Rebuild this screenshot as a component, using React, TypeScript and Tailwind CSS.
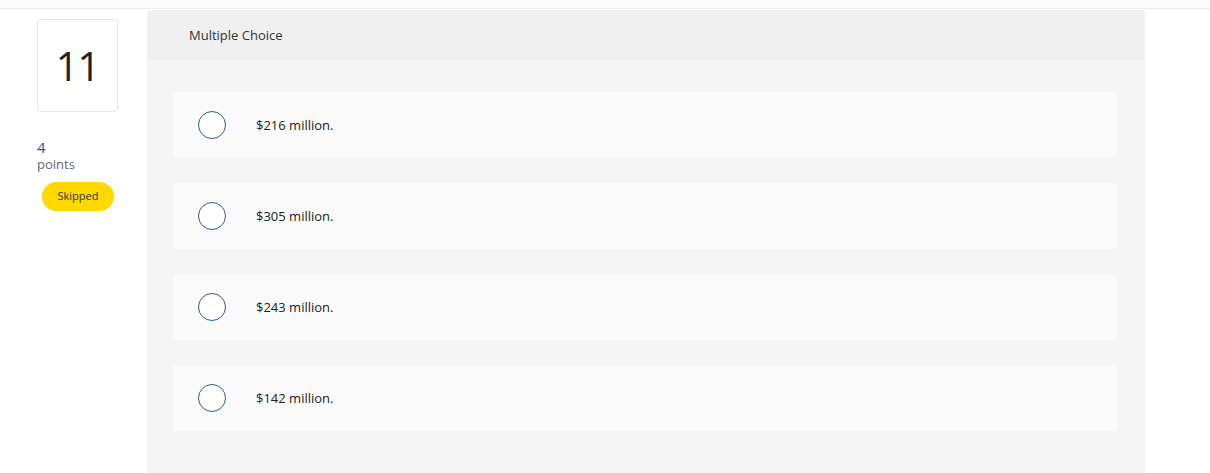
const options = ["$216 million.", "$305 million.", "$243 million.", "$142 million."];

export default function App() {
  return (
    <div
      className="h-[473px] w-[1210px] overflow-hidden bg-white text-[#222]"
      style={{ fontFamily: '"Open Sans", "Liberation Sans", sans-serif' }}
    >
      <div className="h-[9px] border-b border-[#ececec] bg-[#fcfcfc]" />
      <div className="flex pt-px">
        <aside className="ml-[37px] w-[81px] shrink-0 pt-[9px]">
          <div className="flex h-[93px] w-[81px] items-center justify-center rounded-[4px] border border-[#e6e6e6]">
            <span className="text-[40px] leading-none tracking-[-1px] text-[#222]">11</span>
          </div>
          <div className="mt-[26px] text-[15px] leading-[18px] text-[#1f5694]">4</div>
          <div className="text-[13px] leading-[16px] text-[#666]">points</div>
          <div className="mt-[10px] ml-[5px] flex h-[29px] w-[72px] items-center justify-center rounded-full bg-[#ffd800] text-[11px] text-[#333]">
            Skipped
          </div>
        </aside>
        <main className="ml-[29px] h-[470px] w-[998px] overflow-hidden rounded-t-[3px] bg-[#f5f5f5]">
          <div className="flex h-[50px] items-center bg-[#f0f0f0] pl-[42px] pt-[2px] text-[13px] text-[#333]">
            Multiple Choice
          </div>
          <div className="flex flex-col gap-[25px] px-[26px] pt-[32px] pr-[28px]">
            {options.map((o) => (
              <label
                key={o}
                className="flex h-[66px] items-center rounded-[3px] bg-[#fafafa] pl-[25px]"
              >
                <span className="h-[28px] w-[28px] shrink-0 rounded-full border-[1.5px] border-[#2c5d8f] bg-white" />
                <span className="ml-[30px] pt-[2px] text-[13px] text-[#222]">{o}</span>
              </label>
            ))}
          </div>
        </main>
      </div>
    </div>
  );
}
